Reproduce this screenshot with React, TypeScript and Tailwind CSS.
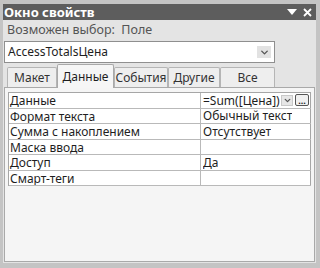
import { ChevronDown } from 'lucide-react'

const rows: { name: string; value?: string; active?: boolean }[] = [
  { name: 'Данные', value: '=Sum([Цена])', active: true },
  { name: 'Формат текста', value: 'Обычный текст' },
  { name: 'Сумма с накоплением', value: 'Отсутствует' },
  { name: 'Маска ввода' },
  { name: 'Доступ', value: 'Да' },
  { name: 'Смарт-теги' },
]

const tabs = [
  { label: 'Макет', w: 'w-[50px]' },
  { label: 'Данные', w: 'w-[57px]', active: true },
  { label: 'События', w: 'w-[54px]' },
  { label: 'Другие', w: 'w-[52px]' },
  { label: 'Все', w: 'w-[55px]' },
]

export default function App() {
  return (
    <div
      className="w-[320px] h-[268px] bg-[#c4c4c4] pt-[4px] pl-[3px] pr-[4px] pb-[5px] text-[12px] text-[#1e1e1e]"
      style={{ fontFamily: '"Noto Sans", "DejaVu Sans", sans-serif' }}
    >
      <div className="flex flex-col h-full bg-[#e4e4e4]">
        {/* title bar */}
        <div className="h-[16px] bg-[#5d5d5d] flex items-center justify-between pl-[1px] pr-[4px]">
          <span className="text-white font-bold text-[13px] leading-none">Окно свойств</span>
          <div className="flex items-center gap-[6px]">
            <svg width="10" height="6" viewBox="0 0 10 6">
              <path d="M0 0 H10 L5 6 Z" fill="#fff" />
            </svg>
            <svg width="9" height="9" viewBox="0 0 9 9">
              <path d="M1 1 L8 8 M8 1 L1 8" stroke="#fff" strokeWidth="1.8" />
            </svg>
          </div>
        </div>

        <div className="h-[20px] flex items-center pl-[4px] text-[12.5px] text-[#555] leading-none">
          Возможен выбор:&nbsp;&nbsp;Поле
        </div>

        {/* combo */}
        <div className="ml-[1px] mt-[1px] w-[271px] h-[22px] bg-white border border-[#8f8f8f] flex items-center justify-between pl-[3px] pr-[3px]">
          <span className="leading-none">AccessTotalsЦена</span>
          <div className="w-[14px] h-[12px] bg-[#e2e2e2] flex items-center justify-center">
            <ChevronDown size={11} strokeWidth={3} className="text-[#555]" />
          </div>
        </div>

        {/* tabs */}
        <div className="flex items-end h-[24px] pl-[4px]">
          {tabs.map((t) =>
            t.active ? (
              <div
                key={t.label}
                className={`${t.w} h-[24px] bg-[#f6f6f6] border border-b-0 border-[#a9a9a9] rounded-t-[2px] flex items-center justify-center -mb-px relative z-10`}
              >
                {t.label}
              </div>
            ) : (
              <div
                key={t.label}
                className={`${t.w} h-[20px] bg-[#eeeeee] border border-b-0 border-[#b5b5b5] rounded-t-[2px] flex items-center justify-center text-[#333]`}
              >
                {t.label}
              </div>
            ),
          )}
        </div>

        {/* content */}
        <div className="flex-1 bg-[#f5f5f5] border border-[#a9a9a9] mx-[1px] mb-[1px] pt-[4px] pl-[3px] pr-[3px]">
          <div className="border-l border-t border-[#a6a6a6] bg-white">
            {rows.map((r) => (
              <div key={r.name} className="flex h-[15.5px] border-b border-[#b9b9b9]">
                <div className="w-[192px] border-r border-[#b9b9b9] pl-[1px] leading-[15px] truncate">
                  {r.name}
                </div>
                <div className="flex-1 border-r border-[#a6a6a6] pl-[2px] leading-[15px] flex items-center justify-between">
                  <span className="truncate">{r.value}</span>
                  {r.active && (
                    <div className="flex items-center gap-[2px] pr-[1px]">
                      <div className="w-[12px] h-[11px] bg-[#e6e6e6] border border-[#c8c8c8] flex items-center justify-center">
                        <ChevronDown size={9} strokeWidth={3.5} className="text-[#555]" />
                      </div>
                      <div className="w-[14px] h-[12px] bg-[#f0f0f0] border border-[#555] rounded-[2px] flex items-end justify-center text-[9px] font-bold leading-[8px]">
                        ...
                      </div>
                    </div>
                  )}
                </div>
              </div>
            ))}
          </div>
        </div>
      </div>
    </div>
  )
}
